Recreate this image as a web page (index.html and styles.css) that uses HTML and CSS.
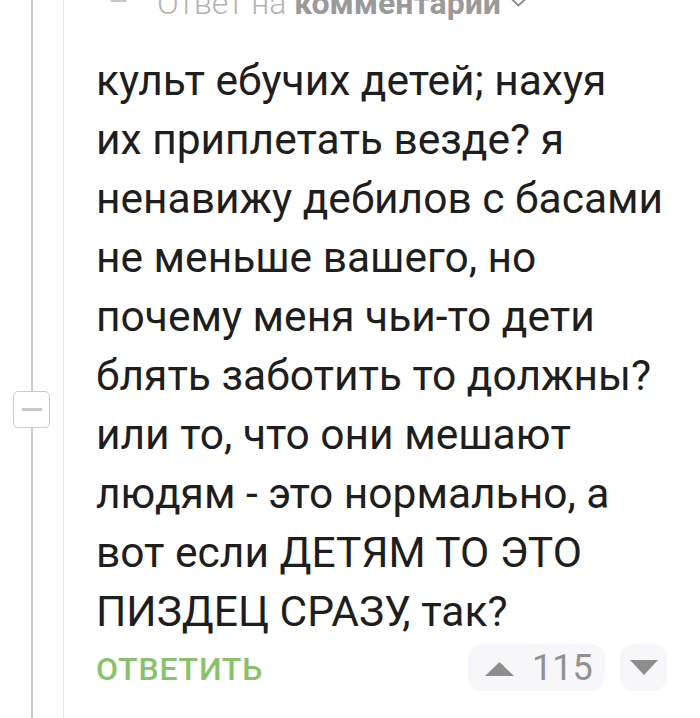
FILE: index.html
```html
<!DOCTYPE html>
<html lang="ru">
<head>
<meta charset="utf-8">
<link rel="stylesheet" href="styles.css">
</head>
<body>
<div class="thread">
  <div class="rail">
    <div class="rail-line rail-top"></div>
    <button class="collapse" aria-label="Свернуть"><span class="collapse-dash"></span></button>
    <div class="rail-line rail-bottom"></div>
  </div>
  <div class="comment">
    <div class="header">
      <span class="avatar-stub"></span>
      <span class="reply-to">Ответ на <b>комментарий</b></span>
      <svg class="chevron" width="17" height="10" viewBox="0 0 17 10"><polyline points="1.5,1 8.5,7.5 15.5,1" fill="none" stroke="#8a8a8a" stroke-width="1.8"/></svg>
    </div>
    <div class="body">культ ебучих детей; нахуя<br>их приплетать везде? я<br>ненавижу дебилов с басами<br>не меньше вашего, но<br>почему меня чьи-то дети<br>блять заботить то должны?<br>или то, что они мешают<br>людям - это нормально, а<br>вот если ДЕТЯМ ТО ЭТО<br>ПИЗДЕЦ СРАЗУ, так?</div>
    <div class="actions">
      <span class="reply">ОТВЕТИТЬ</span>
      <div class="votes">
        <div class="vote-up">
          <svg width="29" height="14" viewBox="0 0 29 14"><polygon points="14.5,0 29,14 0,14" fill="#8e8e8e"/></svg>
          <span class="count">115</span>
        </div>
        <div class="vote-down">
          <svg width="28" height="15" viewBox="0 0 28 15"><polygon points="0,0 28,0 14,15" fill="#8e8e8e"/></svg>
        </div>
      </div>
    </div>
  </div>
</div>
</body>
</html>
```

FILE: styles.css
```css
* { box-sizing: border-box; }
html, body {
  margin: 0;
  padding: 0;
  background: #ffffff;
}
body {
  width: 700px;
  height: 718px;
  overflow: hidden;
  font-family: Roboto, "Noto Sans", sans-serif;
}
.thread {
  display: flex;
  height: 718px;
}
.rail {
  width: 63px;
  flex: 0 0 63px;
  display: flex;
  flex-direction: column;
  align-items: flex-start;
}
.rail-line {
  width: 2px;
  margin-left: 31px;
  background: #c9c9c9;
}
.rail-top { height: 391px; flex: 0 0 391px; }
.rail-bottom { flex: 1; }
.collapse {
  margin: 0 0 0 13px;
  width: 37px;
  height: 37px;
  flex: 0 0 37px;
  border: 1.5px solid #cbcbcb;
  border-radius: 5px;
  background: #fff;
  padding: 0;
  display: flex;
  align-items: center;
  justify-content: center;
}
.collapse-dash {
  display: block;
  width: 20px;
  height: 3px;
  background: #c8c8c8;
}
.comment {
  flex: 1;
  border-left: 1.5px solid #e6e6e6;
  padding-left: 32px;
  display: flex;
  flex-direction: column;
}
.header {
  display: flex;
  align-items: baseline;
  height: 30px;
  margin-top: -12px;
  font-size: 32px;
  line-height: 30px;
}
.avatar-stub {
  display: block;
  align-self: flex-start;
  width: 17px;
  height: 14px;
  margin-left: 14px;
  background: #c8c8c8;
  border-radius: 2px;
}
.reply-to {
  margin-left: 30px;
  color: #b3b3b3;
  font-weight: 300;
  white-space: nowrap;
}
.reply-to b {
  color: #9a9a9a;
  font-weight: 700;
}
.chevron {
  align-self: flex-start;
  margin-left: 9px;
  margin-top: 10px;
}
.body {
  margin-top: 33px;
  font-size: 42.5px;
  line-height: 59px;
  color: #1e1e1e;
  white-space: nowrap;
}
.actions {
  display: flex;
  align-items: center;
  justify-content: space-between;
  margin-top: 3px;
  height: 47px;
  padding-right: 33px;
}
.reply {
  color: #8ac26c;
  font-size: 32px;
  font-weight: 500;
  letter-spacing: 0.8px;
  margin-top: 3px;
}
.votes {
  display: flex;
  gap: 15px;
}
.vote-up {
  display: flex;
  align-items: center;
  gap: 18px;
  height: 47px;
  width: 137px;
  padding-left: 17px;
  background: #f7f7f9;
  border-radius: 14px;
}
.vote-up svg { margin-top: 2px; }
.count {
  font-size: 36px;
  color: #919191;
  line-height: 1;
}
.vote-down {
  width: 47px;
  height: 47px;
  background: #f7f7f9;
  border-radius: 14px;
  display: flex;
  align-items: center;
  justify-content: center;
}
```
